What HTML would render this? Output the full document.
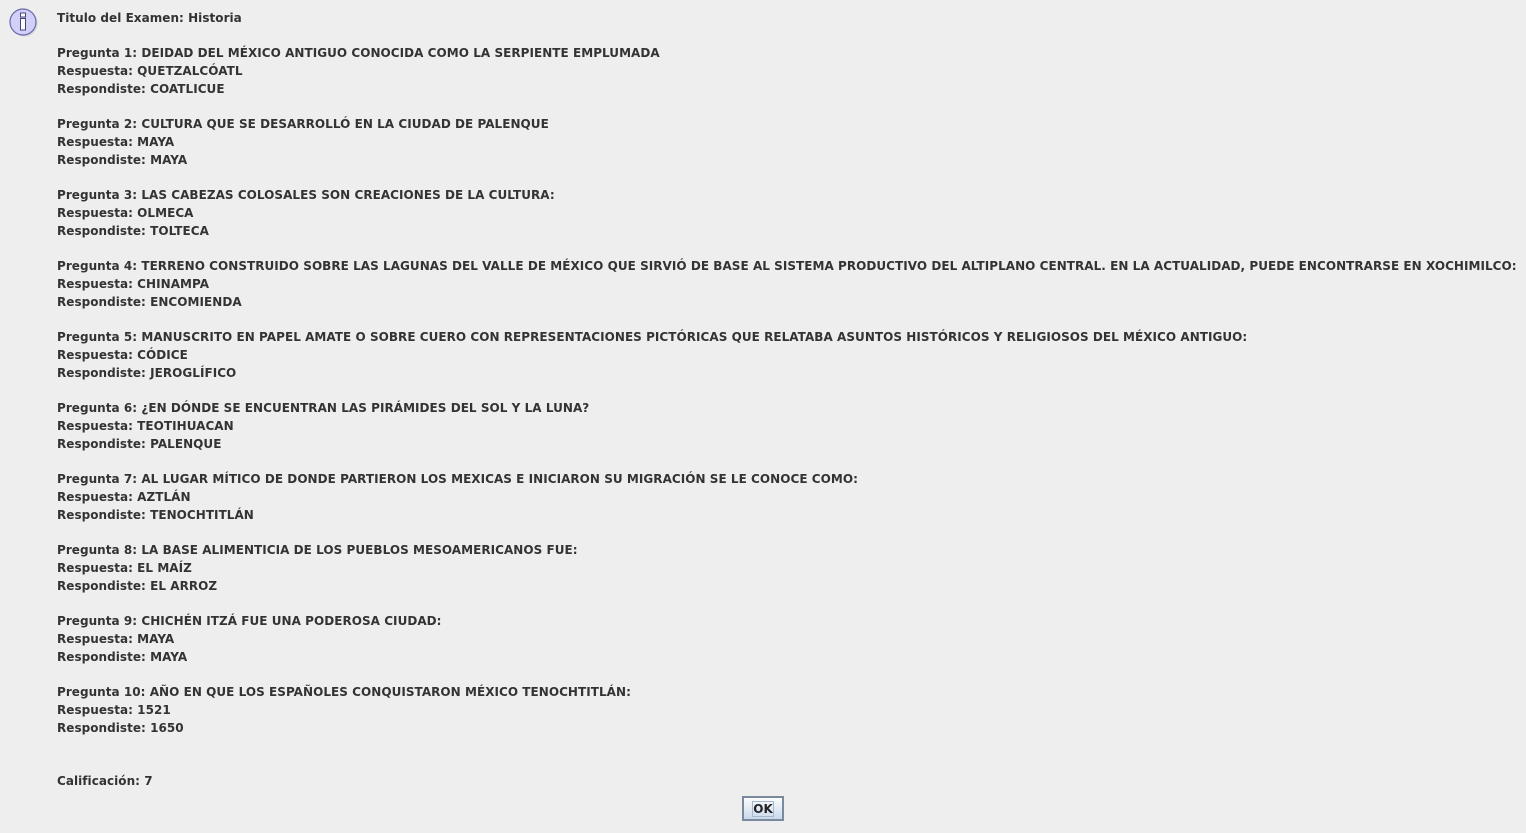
<!DOCTYPE html>
<html><head><meta charset="utf-8"><style>
html,body{margin:0;padding:0;background:#eeeeee;width:1526px;height:833px;overflow:hidden;}
.t{position:absolute;left:57px;top:9.5px;font-family:"DejaVu Sans","Liberation Sans",sans-serif;font-weight:bold;font-size:12px;line-height:17.75px;letter-spacing:0.04px;color:#333;white-space:pre;}
.btn{position:absolute;left:742px;top:796px;width:38px;height:21px;border:2px solid #7a8a9c;background:linear-gradient(#fbfcfe,#c9d9ec);}
.btn span{position:absolute;left:8px;top:3px;width:20px;height:14px;border:1px solid #a8b8cc;font-family:"DejaVu Sans",sans-serif;font-weight:bold;font-size:12px;line-height:14px;text-align:center;color:#222;}
</style></head><body>
<svg style="position:absolute;left:8px;top:7px" width="34" height="34" viewBox="0 0 34 34">
<circle cx="16.5" cy="16.5" r="13" fill="#bbb" opacity="0.5"/>
<circle cx="15" cy="15" r="13" fill="#d0d0f8" stroke="#6a6aa8" stroke-width="1.2"/>
<rect x="12.5" y="6" width="5" height="4" fill="#fff" stroke="#44447a" stroke-width="1"/>
<rect x="12.5" y="11.5" width="5" height="11.5" fill="#fff" stroke="#44447a" stroke-width="1"/>
</svg>
<div class="t">Titulo del Examen: Historia

Pregunta 1: DEIDAD DEL MÉXICO ANTIGUO CONOCIDA COMO LA SERPIENTE EMPLUMADA
Respuesta: QUETZALCÓATL
Respondiste: COATLICUE

Pregunta 2: CULTURA QUE SE DESARROLLÓ EN LA CIUDAD DE PALENQUE
Respuesta: MAYA
Respondiste: MAYA

Pregunta 3: LAS CABEZAS COLOSALES SON CREACIONES DE LA CULTURA:
Respuesta: OLMECA
Respondiste: TOLTECA

Pregunta 4: TERRENO CONSTRUIDO SOBRE LAS LAGUNAS DEL VALLE DE MÉXICO QUE SIRVIÓ DE BASE AL SISTEMA PRODUCTIVO DEL ALTIPLANO CENTRAL. EN LA ACTUALIDAD, PUEDE ENCONTRARSE EN XOCHIMILCO:
Respuesta: CHINAMPA
Respondiste: ENCOMIENDA

Pregunta 5: MANUSCRITO EN PAPEL AMATE O SOBRE CUERO CON REPRESENTACIONES PICTÓRICAS QUE RELATABA ASUNTOS HISTÓRICOS Y RELIGIOSOS DEL MÉXICO ANTIGUO:
Respuesta: CÓDICE
Respondiste: JEROGLÍFICO

Pregunta 6: ¿EN DÓNDE SE ENCUENTRAN LAS PIRÁMIDES DEL SOL Y LA LUNA?
Respuesta: TEOTIHUACAN
Respondiste: PALENQUE

Pregunta 7: AL LUGAR MÍTICO DE DONDE PARTIERON LOS MEXICAS E INICIARON SU MIGRACIÓN SE LE CONOCE COMO:
Respuesta: AZTLÁN
Respondiste: TENOCHTITLÁN

Pregunta 8: LA BASE ALIMENTICIA DE LOS PUEBLOS MESOAMERICANOS FUE:
Respuesta: EL MAÍZ
Respondiste: EL ARROZ

Pregunta 9: CHICHÉN ITZÁ FUE UNA PODEROSA CIUDAD:
Respuesta: MAYA
Respondiste: MAYA

Pregunta 10: AÑO EN QUE LOS ESPAÑOLES CONQUISTARON MÉXICO TENOCHTITLÁN:
Respuesta: 1521
Respondiste: 1650


Calificación: 7</div>
<div class="btn"><span>OK</span></div>
</body></html>
